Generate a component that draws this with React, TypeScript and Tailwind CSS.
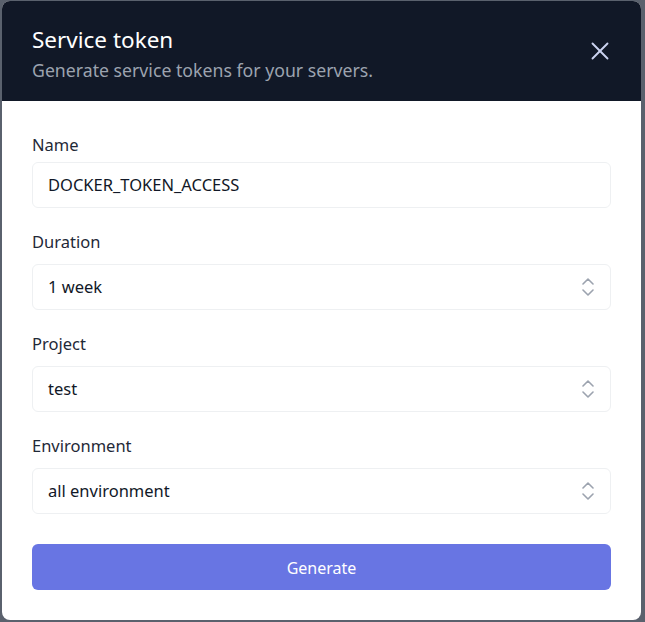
import { X } from "lucide-react";

const fields = [
  { label: "Name", value: "DOCKER_TOKEN_ACCESS", select: false },
  { label: "Duration", value: "1 week", select: true },
  { label: "Project", value: "test", select: true },
  { label: "Environment", value: "all environment", select: true },
];

function UpDown() {
  return (
    <svg width="12" height="18" viewBox="0 0 12 18" fill="none" stroke="currentColor" strokeWidth="1.6" strokeLinecap="round" strokeLinejoin="round">
      <path d="M1 6 L6 1 L11 6" />
      <path d="M1 12 L6 17 L11 12" />
    </svg>
  );
}

export default function App() {
  return (
    <div
      className="min-h-screen bg-[#5a616d] pl-[2px] pt-[1px]"
      style={{ fontFamily: '"Noto Sans", "Open Sans", sans-serif' }}
    >
      <div className="flex h-[619px] w-[639px] flex-col overflow-hidden rounded-lg bg-white">
        <div className="flex h-[100px] items-center justify-between bg-[#111827] pl-[30px] pr-[26px]">
          <div className="pt-[6px]">
            <h2 className="text-[22.5px] leading-7 text-white">Service token</h2>
            <p className="mt-[4px] text-[17.7px] leading-6 text-[#9ca3af]">
              Generate service tokens for your servers.
            </p>
          </div>
          <button className="text-[#cbd2f0]">
            <X size={30} strokeWidth={1.5} />
          </button>
        </div>

        <div className="flex flex-col px-[30px] pt-[32px]">
          {fields.map((f, i) => (
            <div key={f.label} className={i === 0 ? "flex flex-col" : "mt-[22px] flex flex-col"}>
              <label className="text-[16.5px] leading-6 text-[#1f2937]">{f.label}</label>
              <div
                className={
                  (i === 0 ? "mt-[5px] " : "mt-[10px] ") +
                  "flex h-[46px] items-center justify-between rounded-md border border-[#eef0f2] pl-[15px] pr-[16px]"
                }
              >
                <span className="text-[16.5px] text-[#111827]">{f.value}</span>
                {f.select && (
                  <span className="text-[#9ca3af]">
                    <UpDown />
                  </span>
                )}
              </div>
            </div>
          ))}
          <button className="mt-[30px] h-[46px] rounded-md bg-[#6875e3] pt-[2px] text-base text-white">
            Generate
          </button>
        </div>
      </div>
    </div>
  );
}
